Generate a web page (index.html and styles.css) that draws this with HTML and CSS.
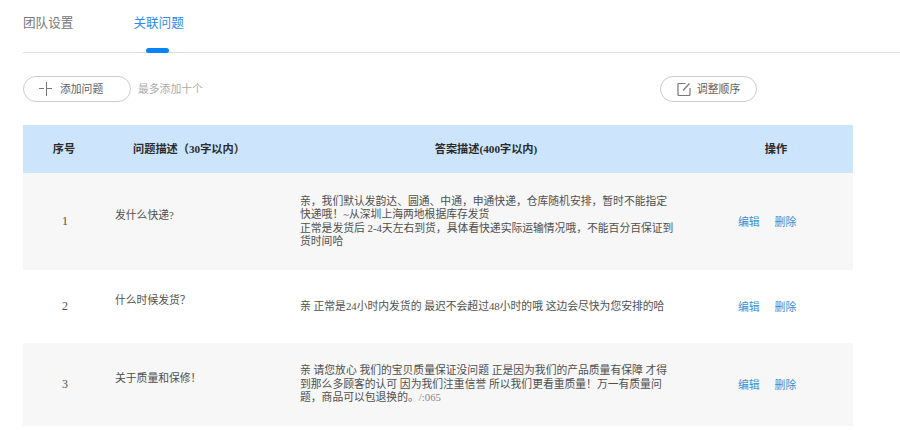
FILE: index.html
```html
<!DOCTYPE html>
<html lang="zh-CN">
<head>
<meta charset="utf-8">
<title>关联问题</title>
<link rel="stylesheet" href="styles.css">
</head>
<body>
<div class="page">
  <nav class="tabs">
    <a class="tab">团队设置</a>
    <a class="tab tab-active">关联问题</a>
  </nav>
  <div class="toolbar">
    <div class="toolbar-left">
      <button class="pill pill-add">
        <svg width="14" height="14" viewBox="0 0 14 14"><path d="M0 6.5H5M7.5 0V14M7.5 6.5H13" fill="none" stroke="#777" stroke-width="1"/></svg>
        <span class="pill-text">添加问题</span>
      </button>
      <span class="hint">最多添加十个</span>
    </div>
    <button class="pill pill-order">
      <svg width="14" height="14" viewBox="0 0 14 14"><path d="M8.5 1.5H2a1 1 0 0 0-1 1v10a1 1 0 0 0 1 1h10a1 1 0 0 0 1-1V6" fill="none" stroke="#777" stroke-width="1.2"/><path d="M6 8.5L12.5 1.5" fill="none" stroke="#777" stroke-width="1.2"/></svg>
      <span class="pill-text">调整顺序</span>
    </button>
  </div>
  <section class="table">
    <div class="row head">
      <div class="c-no">序号</div>
      <div class="c-q">问题描述（30字以内）</div>
      <div class="c-a">答案描述(400字以内)</div>
      <div class="c-op">操作</div>
    </div>
    <div class="row body tall shade">
      <div class="c-no">1</div>
      <div class="c-q">发什么快递?</div>
      <div class="c-a">亲，我们默认发韵达、圆通、中通，申通快递，仓库随机安排，暂时不能指定快递哦！~从深圳上海两地根据库存发货<br>正常是发货后 2-4天左右到货，具体看快递实际运输情况哦，不能百分百保证到货时间哈</div>
      <div class="c-op"><a>编辑</a><a>删除</a></div>
    </div>
    <div class="row body mid">
      <div class="c-no">2</div>
      <div class="c-q">什么时候发货？</div>
      <div class="c-a">亲 正常是24小时内发货的 最迟不会超过48小时的哦 这边会尽快为您安排的哈</div>
      <div class="c-op"><a>编辑</a><a>删除</a></div>
    </div>
    <div class="row body low shade">
      <div class="c-no">3</div>
      <div class="c-q">关于质量和保修！</div>
      <div class="c-a">亲 请您放心 我们的宝贝质量保证没问题 正是因为我们的产品质量有保障 才得到那么多顾客的认可 因为我们注重信誉 所以我们更看重质量！万一有质量问题，商品可以包退换的。<span class="code">/:065</span></div>
      <div class="c-op"><a>编辑</a><a>删除</a></div>
    </div>
  </section>
</div>
</body>
</html>
```
FILE: styles.css
```css
* { box-sizing: border-box; }
html, body { margin: 0; background: #fff; }
body {
  font-family: "Liberation Serif", "Noto Sans CJK SC", serif;
  font-size: 10.8px;
  line-height: 13.5px;
  color: #4f4f4f;
  overflow: hidden;
}
.page { width: 900px; height: 430px; padding-left: 23px; }
.tabs {
  display: flex;
  gap: 60px;
  height: 53px;
  border-bottom: 1px solid #ddd;
  padding-top: 13px;
  font-family: "Noto Sans CJK SC", sans-serif;
  font-size: 12.6px;
  line-height: 17px;
  color: #777;
}
.tab { position: relative; }
.tab-active { color: #2a8cf0; }
.tab-active::after {
  content: "";
  position: absolute;
  left: 13px;
  top: 35px;
  width: 23px;
  height: 5px;
  border-radius: 3px;
  background: #0a84f5;
}
.toolbar {
  display: flex;
  justify-content: space-between;
  width: 734px;
  margin-top: 23px;
}
.toolbar-left { display: flex; align-items: center; gap: 7px; }
.pill {
  display: flex;
  align-items: center;
  height: 26px;
  border: 1px solid #ccc;
  border-radius: 13px;
  background: #fff;
  padding: 0;
  font-family: "Noto Sans CJK SC", sans-serif;
  font-size: 10.8px;
  color: #5f5f5f;
}
.pill-text { padding-bottom: 2px; }
.pill-add { width: 108px; padding-left: 15px; gap: 7px; }
.pill-order { width: 97px; padding-left: 16px; gap: 6px; }
.hint { font-family: "Noto Sans CJK SC", sans-serif; color: #aaa; }
.table { width: 830px; margin-top: 23px; }
.row { display: flex; align-items: center; }
.head {
  height: 48px;
  padding-top: 2px;
  background: #cce5fd;
  color: #2b2b2b;
  font-size: 11.2px;
  font-weight: 700;
  text-align: center;
}
.shade { background: #f7f7f7; }
.tall { height: 97px; }
.mid { height: 73px; }
.low { height: 83px; }
.c-no { width: 82px; text-align: center; }
.c-q { width: 168px; }
.c-a { width: 426px; }
.c-op { flex: 1; }
.body .c-no { font-size: 12px; padding-left: 2px; }
.body .c-q { padding: 0 10px 11px; }
.body .c-a { padding: 0 23px 0 27px; }
.body .c-op { display: flex; gap: 15px; padding-left: 39px; color: #3490d6; font-family: "Noto Sans CJK SC", sans-serif; }
.code { color: #888; }
```
